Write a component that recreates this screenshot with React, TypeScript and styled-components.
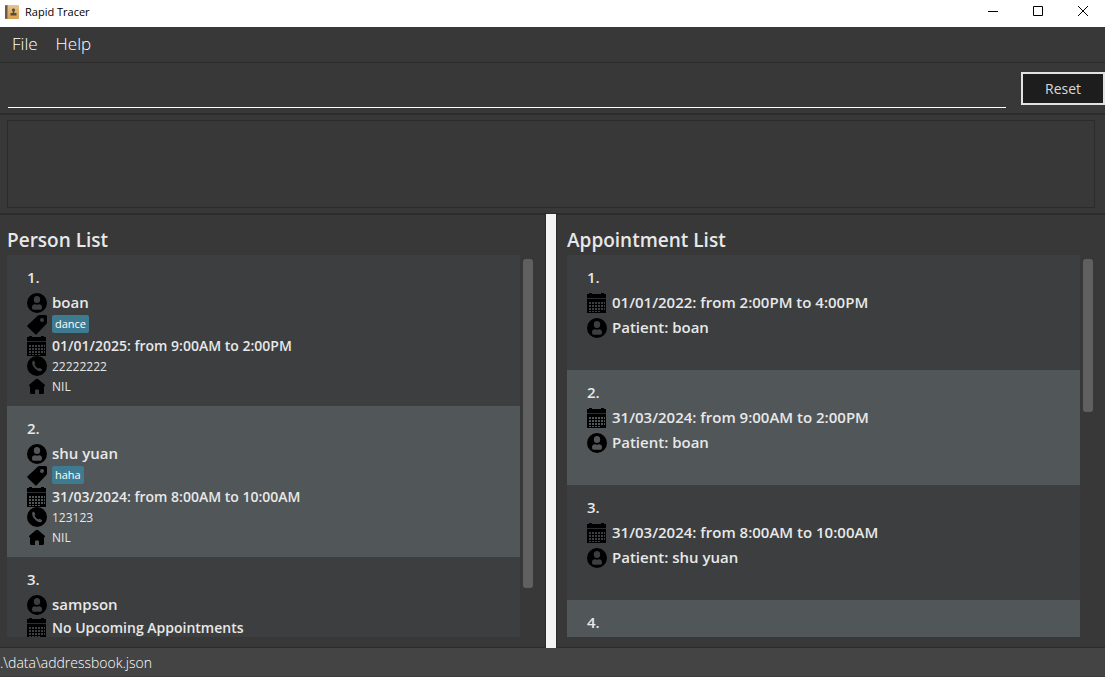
import React from "react";
import styled, { createGlobalStyle } from "styled-components";

const GlobalStyle = createGlobalStyle`
  * { box-sizing: border-box; }
  body {
    margin: 0;
    background: #383838;
    color: #e8e8e8;
    font-family: "Open Sans", "Noto Sans", sans-serif;
  }
  button, input { font-family: inherit; }
`;

const Window = styled.div`
  display: flex;
  flex-direction: column;
  height: 100vh;
  overflow: hidden;
`;

const TitleBar = styled.header`
  display: flex;
  align-items: center;
  height: 27px;
  padding: 0 0 4px 5px;
  background: #ffffff;
  color: #000000;
`;

const WindowTitle = styled.h1`
  flex: 1;
  margin: 0 0 0 6px;
  font-size: 11px;
  font-weight: 400;
  line-height: 16px;
`;

const WindowButton = styled.button`
  display: flex;
  align-items: center;
  justify-content: center;
  width: 45px;
  height: 23px;
  padding: 0 0 1px;
  border: 0;
  background: transparent;
`;

const MenuBar = styled.nav`
  display: flex;
  gap: 18px;
  height: 36px;
  padding: 0 12px;
  border-bottom: 1px solid #2b2b2b;
`;

const MenuItem = styled.button`
  height: 34px;
  padding: 0;
  border: 0;
  background: transparent;
  color: #ffffff;
  font-size: 17px;
  font-weight: 300;
  line-height: 34px;
`;

const CommandBar = styled.form`
  display: flex;
  align-items: center;
  gap: 15px;
  height: 52px;
  padding-left: 8px;
  border-bottom: 2px solid #2b2b2b;
`;

const CommandInput = styled.input`
  flex: 1;
  min-width: 0;
  height: 40px;
  padding: 0;
  border: 0;
  border-bottom: 1px solid #ffffff;
  outline: 0;
  background: transparent;
  color: #ffffff;
  font-size: 17px;
  font-weight: 300;
`;

const ResetButton = styled.button`
  width: 84px;
  height: 33px;
  padding: 1px 0 0;
  border: 2px solid #e2e2e2;
  background: #1d1d1d;
  color: #d8d8d8;
  font-size: 14px;
  line-height: 20px;
`;

const ResultPanel = styled.section`
  height: 100px;
  padding: 5px 10px 5px 7px;
  border-bottom: 2px solid #2b2b2b;
`;

const ResultDisplay = styled.output`
  display: block;
  height: 88px;
  border: 1px solid #2b2b2b;
`;

const SplitPane = styled.main`
  flex: 1;
  min-height: 0;
  display: grid;
  grid-template-columns: 546fr 10px 549fr;
`;

const Divider = styled.div`
  margin-top: -1px;
  background: #f4f4f4;
`;

const Pane = styled.section<{ $side: "left" | "right" }>`
  display: flex;
  flex-direction: column;
  min-width: 0;
  min-height: 0;
  padding: ${({ $side }) => ($side === "left" ? "10px 12px 10px 7px" : "10px 12px 10px 10px")};
  border-bottom: 1px solid #2b2b2b;
  border-${({ $side }) => ($side === "left" ? "right" : "left")}: 1px solid #2b2b2b;
`;

const PaneTitle = styled.h2`
  margin: 0;
  font-size: 19px;
  font-weight: 600;
  line-height: 30px;
`;

const ListArea = styled.div`
  flex: 1;
  min-height: 0;
  display: flex;
  gap: 3px;
`;

const List = styled.ol`
  flex: 1;
  min-width: 0;
  margin: 0;
  padding: 0;
  overflow: hidden;
  list-style: none;
`;

const Track = styled.div`
  width: 10px;
  padding: 4px 0;
`;

const Thumb = styled.div`
  border-radius: 3px;
  background: #606060;
`;

const Card = styled.li<{ $kind: "person" | "appointment" }>`
  padding: ${({ $kind }) => ($kind === "person" ? "10px 20px" : "10px 20px 30px")};
  background: #3c3e3f;
  &:nth-child(even) { background: #515658; }
`;

const Row = styled.div<{ $height: number; $gapAbove?: number }>`
  display: flex;
  align-items: center;
  gap: 5px;
  height: ${({ $height }) => $height}px;
  margin-top: ${({ $gapAbove = 0 }) => $gapAbove}px;
  white-space: nowrap;
  svg { flex: none; }
`;

const BigText = styled.span`
  padding-bottom: 2px;
  font-size: 15px;
  font-weight: 600;
  line-height: 20px;
`;

const DateText = styled(BigText)`
  padding-bottom: 0;
  font-size: 14px;
`;

const SmallText = styled.span`
  padding-top: 2px;
  font-size: 12px;
  line-height: 20px;
`;

const Tag = styled.span`
  align-self: flex-start;
  height: 18px;
  padding: 0 3px;
  border-radius: 2px;
  background: #3e7b91;
  color: #ffffff;
  font-size: 11px;
  line-height: 18px;
`;

const StatusBar = styled.footer`
  height: 29px;
  background: #444444;
  border-bottom: 1px solid #3c3c3c;
  color: #ffffff;
  font-size: 14px;
  font-weight: 300;
  line-height: 29px;
`;

const AppIcon = () => (
  <svg width="14" height="14" viewBox="0 0 14 14" aria-hidden="true">
    <defs>
      <linearGradient id="cover" x1="0" y1="0" x2="0" y2="1">
        <stop offset="0" stopColor="#e6c48f" />
        <stop offset="1" stopColor="#d5a04e" />
      </linearGradient>
    </defs>
    <rect width="14" height="14" rx="1" fill="url(#cover)" />
    <rect width="2" height="14" rx="1" fill="#6a5a4a" />
    <rect x="2" width="1" height="14" fill="#a08a6c" />
    <path d="M8.500 3.500a1.600 1.600 0 0 1 .8 3v1.500H11.500v2.500h-6v-2.500h2.200V6.500a1.600 1.600 0 0 1 .8-3z" fill="#5a4a38" />
  </svg>
);

const PersonIcon = () => (
  <svg width="20" height="20" viewBox="0 0 20 20" aria-hidden="true">
    <path
      fillRule="evenodd"
      d="M10 0a10 10 0 1 0 0 20a10 10 0 0 0 0-20zM10 3a3.200 3.500 0 1 1 0 7a3.200 3.500 0 0 1 0-7zM5 14.200c0-2.200 1.600-3 3-2.900c1.300 .5 2.700 .5 4 0c1.400-.1 3 .7 3 2.900c0 1.700-.6 2.500-1.800 2.500H6.800c-1.200 0-1.800-.8-1.800-2.500z"
    />
  </svg>
);

const TagIcon = () => (
  <svg width="20" height="20" viewBox="0 0 20 20" aria-hidden="true">
    <path
      fillRule="evenodd"
      d="M11 .6Q11.600 0 12.500 0H18.500Q20 0 20 1.500V7.500Q20 8.400 19.400 9L9.600 19.300Q9 20 8.300 19.300L.6 11.700Q-.2 11 .6 10.300zM15 3a2 2 0 1 0 0 4a2 2 0 0 0 0-4z"
    />
  </svg>
);

const gridColumns = [2, 5, 8, 11, 14];
const gridRows = [9, 12, 15];

const CalendarIcon = () => (
  <svg width="20" height="20" viewBox="0 0 20 20" shapeRendering="crispEdges" aria-hidden="true">
    <path d="M0 1h2V0h3v1h9V0h3v1h2v4H0z" />
    <path d="M0 5h19v1H0z" fill="#2b2d2e" />
    <path
      fillRule="evenodd"
      d={
        "M0 6h19v14H0z" +
        gridRows.map((y) => gridColumns.map((x) => `M${x} ${y}h2v2h-2z`).join("")).join("") +
        "M17 9h1v2h-1zM17 12h1v2h-1zM17 15h1v2h-1zM2 18h2v1h-2zM5 18h2v1h-2zM8 18h2v1h-2zM11 18h2v1h-2z"
      }
    />
  </svg>
);

const PhoneIcon = () => (
  <svg width="20" height="20" viewBox="0 0 20 20" aria-hidden="true">
    <path
      fillRule="evenodd"
      d="M10 0a10 10 0 1 0 0 20a10 10 0 0 0 0-20zM5.300 5.500L6.800 4.600L8.400 7.300L7.500 8.600Q8.600 11.400 11.400 12.600L12.800 11.800L15.300 13.600L14.300 15.100Q12.500 16 9 13.500Q4.500 9.500 5.300 5.500z"
    />
  </svg>
);

const HomeIcon = () => (
  <svg width="20" height="20" viewBox="0 0 20 20" aria-hidden="true">
    <path d="M10 2.800Q10.600 2.800 11.200 3.300L17.500 8.400Q18.300 9.200 17.800 10.200H17V16.500Q17 18 15.500 18H12V14.500Q12 13.500 11 13.500H9Q8 13.500 8 14.500V18H4.500Q3 18 3 16.500V10.200H2.200Q1.700 9.200 2.500 8.400L8.800 3.300Q9.400 2.800 10 2.800z" />
  </svg>
);

interface Person {
  name: string;
  tag?: string;
  appointment: string;
  phone: string;
  address: string;
}

const persons: Person[] = [
  { name: "boan", tag: "dance", appointment: "01/01/2025: from 9:00AM to 2:00PM", phone: "22222222", address: "NIL" },
  { name: "shu yuan", tag: "haha", appointment: "31/03/2024: from 8:00AM to 10:00AM", phone: "123123", address: "NIL" },
  { name: "sampson", appointment: "No Upcoming Appointments", phone: "", address: "" },
];

const appointments = [
  { time: "01/01/2022: from 2:00PM to 4:00PM", patient: "boan" },
  { time: "31/03/2024: from 9:00AM to 2:00PM", patient: "boan" },
  { time: "31/03/2024: from 8:00AM to 10:00AM", patient: "shu yuan" },
  { time: "", patient: "" },
];

const PersonCard = ({ person, index }: { person: Person; index: number }) => (
  <Card $kind="person">
    <Row $height={25}><BigText>{index}.</BigText></Row>
    <Row $height={25}><PersonIcon /><BigText>{person.name}</BigText></Row>
    {person.tag && <Row $height={20}><TagIcon /><Tag>{person.tag}</Tag></Row>}
    <Row $height={20} $gapAbove={1}><CalendarIcon /><DateText>{person.appointment}</DateText></Row>
    <Row $height={20}><PhoneIcon /><SmallText>{person.phone}</SmallText></Row>
    <Row $height={20}><HomeIcon /><SmallText>{person.address}</SmallText></Row>
  </Card>
);

const AppointmentCard = ({ time, patient, index }: { time: string; patient: string; index: number }) => (
  <Card $kind="appointment">
    <Row $height={25}><BigText>{index}.</BigText></Row>
    {time && <Row $height={25}><CalendarIcon /><BigText>{time}</BigText></Row>}
    {patient && <Row $height={25}><PersonIcon /><BigText>Patient: {patient}</BigText></Row>}
  </Card>
);

export default function App() {
  return (
    <Window>
      <GlobalStyle />
      <TitleBar>
        <AppIcon />
        <WindowTitle>Rapid Tracer</WindowTitle>
        <WindowButton type="button" aria-label="Minimize">
          <svg width="10" height="10" viewBox="0 0 10 10"><path d="M0 5.500h10" stroke="#000" /></svg>
        </WindowButton>
        <WindowButton type="button" aria-label="Maximize">
          <svg width="10" height="10" viewBox="0 0 10 10"><path d="M.5 .5h9v9h-9z" fill="none" stroke="#000" /></svg>
        </WindowButton>
        <WindowButton type="button" aria-label="Close">
          <svg width="10" height="10" viewBox="0 0 10 10"><path d="M0 0l10 10M10 0L0 10" stroke="#000" /></svg>
        </WindowButton>
      </TitleBar>
      <MenuBar>
        <MenuItem type="button">File</MenuItem>
        <MenuItem type="button">Help</MenuItem>
      </MenuBar>
      <CommandBar onSubmit={(event) => event.preventDefault()}>
        <CommandInput type="text" aria-label="Command" />
        <ResetButton type="reset">Reset</ResetButton>
      </CommandBar>
      <ResultPanel>
        <ResultDisplay />
      </ResultPanel>
      <SplitPane>
        <Pane $side="left">
          <PaneTitle>Person List</PaneTitle>
          <ListArea>
            <List>
              {persons.map((person, i) => <PersonCard key={i} person={person} index={i + 1} />)}
            </List>
            <Track><Thumb style={{ height: "88%" }} /></Track>
          </ListArea>
        </Pane>
        <Divider />
        <Pane $side="right">
          <PaneTitle>Appointment List</PaneTitle>
          <ListArea>
            <List>
              {appointments.map((item, i) => <AppointmentCard key={i} {...item} index={i + 1} />)}
            </List>
            <Track><Thumb style={{ height: "41%" }} /></Track>
          </ListArea>
        </Pane>
      </SplitPane>
      <StatusBar>.\data\addressbook.json</StatusBar>
    </Window>
  );
}
